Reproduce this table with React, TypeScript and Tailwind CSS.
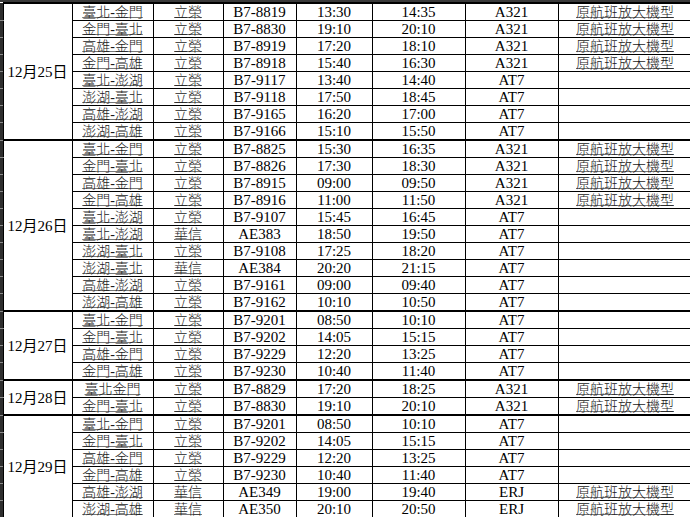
import React from 'react';

type Flight = [string, string, string, string, string, string, string?];

const groups: { date: string; rows: Flight[] }[] = [
  {
    date: '12月25日',
    rows: [
      ['臺北-金門', '立榮', 'B7-8819', '13:30', '14:35', 'A321', '原航班放大機型'],
      ['金門-臺北', '立榮', 'B7-8830', '19:10', '20:10', 'A321', '原航班放大機型'],
      ['高雄-金門', '立榮', 'B7-8919', '17:20', '18:10', 'A321', '原航班放大機型'],
      ['金門-高雄', '立榮', 'B7-8918', '15:40', '16:30', 'A321', '原航班放大機型'],
      ['臺北-澎湖', '立榮', 'B7-9117', '13:40', '14:40', 'AT7'],
      ['澎湖-臺北', '立榮', 'B7-9118', '17:50', '18:45', 'AT7'],
      ['高雄-澎湖', '立榮', 'B7-9165', '16:20', '17:00', 'AT7'],
      ['澎湖-高雄', '立榮', 'B7-9166', '15:10', '15:50', 'AT7'],
    ],
  },
  {
    date: '12月26日',
    rows: [
      ['臺北-金門', '立榮', 'B7-8825', '15:30', '16:35', 'A321', '原航班放大機型'],
      ['金門-臺北', '立榮', 'B7-8826', '17:30', '18:30', 'A321', '原航班放大機型'],
      ['高雄-金門', '立榮', 'B7-8915', '09:00', '09:50', 'A321', '原航班放大機型'],
      ['金門-高雄', '立榮', 'B7-8916', '11:00', '11:50', 'A321', '原航班放大機型'],
      ['臺北-澎湖', '立榮', 'B7-9107', '15:45', '16:45', 'AT7'],
      ['臺北-澎湖', '華信', 'AE383', '18:50', '19:50', 'AT7'],
      ['澎湖-臺北', '立榮', 'B7-9108', '17:25', '18:20', 'AT7'],
      ['澎湖-臺北', '華信', 'AE384', '20:20', '21:15', 'AT7'],
      ['高雄-澎湖', '立榮', 'B7-9161', '09:00', '09:40', 'AT7'],
      ['澎湖-高雄', '立榮', 'B7-9162', '10:10', '10:50', 'AT7'],
    ],
  },
  {
    date: '12月27日',
    rows: [
      ['臺北-金門', '立榮', 'B7-9201', '08:50', '10:10', 'AT7'],
      ['金門-臺北', '立榮', 'B7-9202', '14:05', '15:15', 'AT7'],
      ['高雄-金門', '立榮', 'B7-9229', '12:20', '13:25', 'AT7'],
      ['金門-高雄', '立榮', 'B7-9230', '10:40', '11:40', 'AT7'],
    ],
  },
  {
    date: '12月28日',
    rows: [
      ['臺北金門', '立榮', 'B7-8829', '17:20', '18:25', 'A321', '原航班放大機型'],
      ['金門-臺北', '立榮', 'B7-8830', '19:10', '20:10', 'A321', '原航班放大機型'],
    ],
  },
  {
    date: '12月29日',
    rows: [
      ['臺北-金門', '立榮', 'B7-9201', '08:50', '10:10', 'AT7'],
      ['金門-臺北', '立榮', 'B7-9202', '14:05', '15:15', 'AT7'],
      ['高雄-金門', '立榮', 'B7-9229', '12:20', '13:25', 'AT7'],
      ['金門-高雄', '立榮', 'B7-9230', '10:40', '11:40', 'AT7'],
      ['高雄-澎湖', '華信', 'AE349', '19:00', '19:40', 'ERJ', '原航班放大機型'],
      ['澎湖-高雄', '華信', 'AE350', '20:10', '20:50', 'ERJ', '原航班放大機型'],
    ],
  },
];

// underlined CJK text, the way the sheet shows names and notes
const Mark = ({ children }: { children: React.ReactNode }) => (
  <span className="text-[14px] leading-[12px] font-light text-[#1a1a1a] underline decoration-[#777] underline-offset-0">
    {children}
  </span>
);

export default function App() {
  return (
    <div className="w-[690px] h-[517px] overflow-hidden bg-white font-['Liberation_Serif','Noto_Sans_CJK_TC',serif] text-[15px] leading-[16px] text-black">
      <div className="h-[2px] bg-[#3a3a3a]" />
      <table className="border-collapse table-fixed w-[692px]">
        <colgroup>
          <col className="w-[3px]" />
          <col className="w-[69px]" />
          <col className="w-[81px]" />
          <col className="w-[70px]" />
          <col className="w-[73px]" />
          <col className="w-[76px]" />
          <col className="w-[93px]" />
          <col className="w-[93px]" />
          <col className="w-[134px]" />
        </colgroup>
        <tbody>
          {groups.map((g, gi) =>
            g.rows.map((r, ri) => {
              const last = ri === g.rows.length - 1;
              const first = ri === 0;
              const cell = `p-0 h-[17px] text-center whitespace-nowrap border border-black ${
                last ? 'border-b-2' : ''
              } ${first ? 'border-t-2' : ''}`;
              return (
                <tr key={`${gi}-${ri}`}>
                  <td className="p-0 h-[17px] bg-[#2e2e2e] border-b border-b-[#8a8a8a]" />
                  {first && (
                    <td
                      rowSpan={g.rows.length}
                      className="p-0 text-center whitespace-nowrap border border-black border-t-2 border-b-2"
                    >
                      {g.date}
                    </td>
                  )}
                  <td className={cell}>
                    <Mark>{r[0]}</Mark>
                  </td>
                  <td className={cell}>
                    <Mark>{r[1]}</Mark>
                  </td>
                  <td className={cell}>{r[2]}</td>
                  <td className={cell}>{r[3]}</td>
                  <td className={cell}>{r[4]}</td>
                  <td className={cell}>{r[5]}</td>
                  <td className={cell}>{r[6] && <Mark>{r[6]}</Mark>}</td>
                </tr>
              );
            })
          )}
        </tbody>
      </table>
    </div>
  );
}
